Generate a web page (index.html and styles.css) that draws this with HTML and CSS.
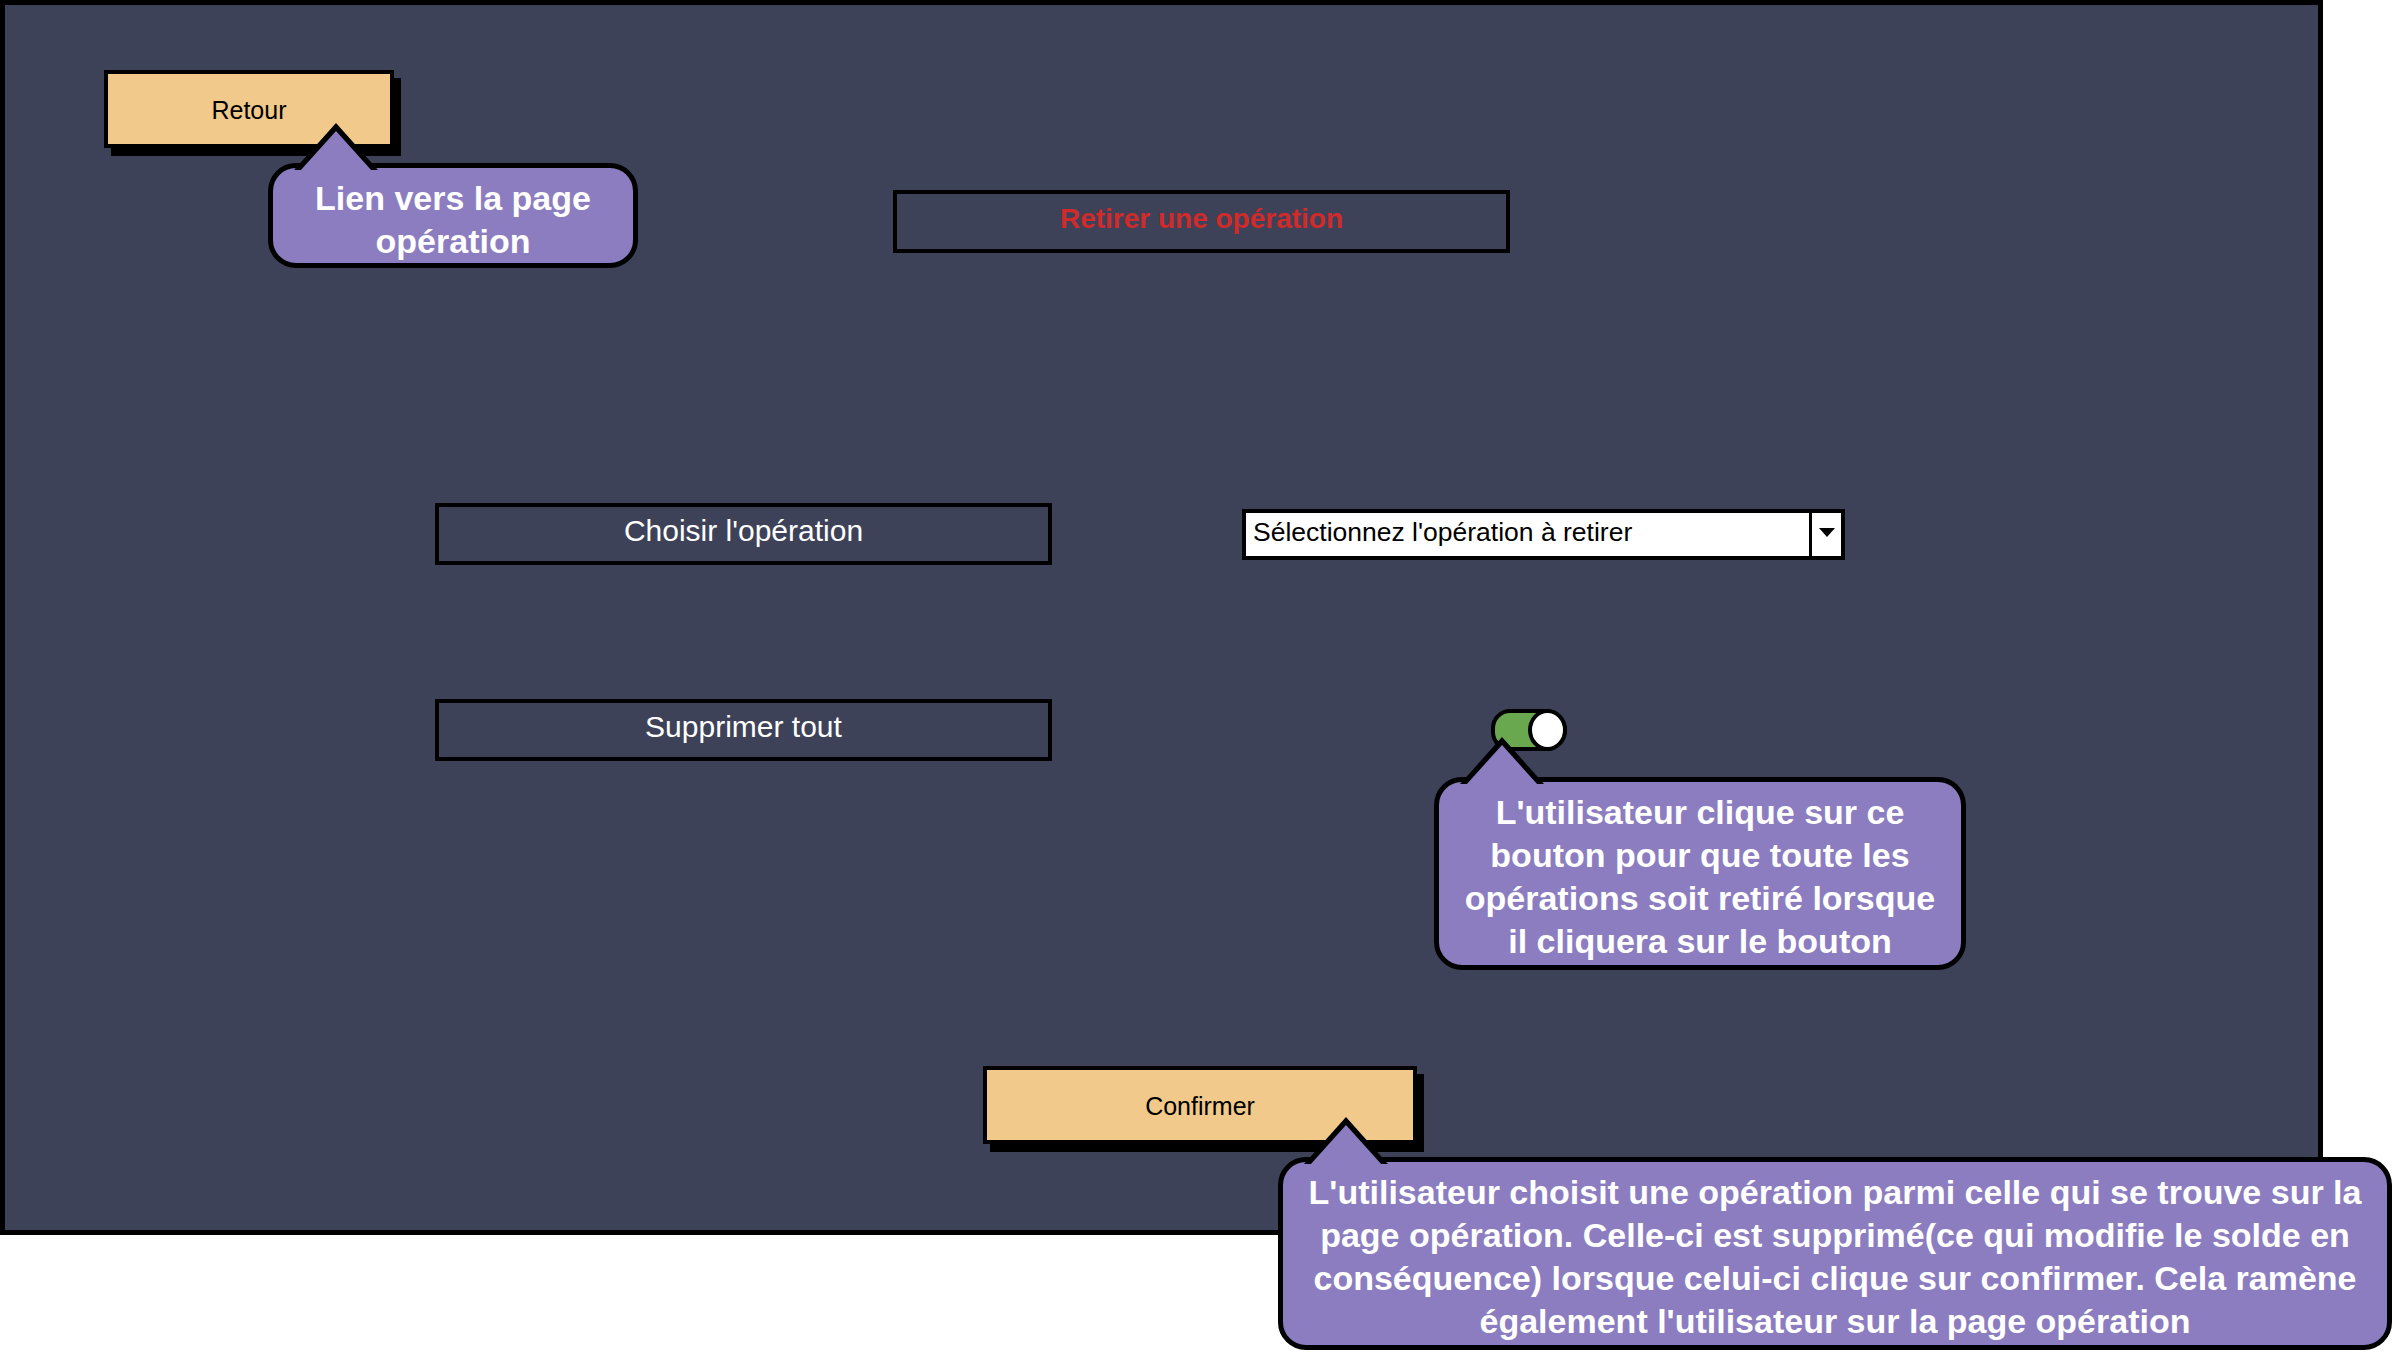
FILE: index.html
```html
<!DOCTYPE html>
<html lang="fr">
<head>
  <meta charset="UTF-8" />
  <meta name="viewport" content="width=device-width, initial-scale=1.0" />
  <title>Retirer une opération</title>
  <link rel="stylesheet" href="styles.css">
</head>
<body>
  <div class="screen">
    <div class="row row-back">
      <button class="btn-orange btn-back">Retour</button>
    </div>

    <div class="row row-title">
      <div class="title-box">Retirer une opération</div>
    </div>

    <div class="row row-choose">
      <div class="label-box">Choisir l'opération</div>
      <div class="select">
        <span class="select-text">Sélectionnez l'opération à retirer</span>
        <span class="select-arrow"></span>
      </div>
    </div>

    <div class="row row-delete">
      <div class="label-box">Supprimer tout</div>
      <div class="toggle"><span class="toggle-knob"></span></div>
    </div>

    <div class="row row-confirm">
      <button class="btn-orange btn-confirm">Confirmer</button>
    </div>
  </div>

  <div class="callout callout-back">Lien vers la page<br>opération</div>

  <div class="callout callout-toggle">L'utilisateur clique sur ce<br>bouton pour que toute les<br>opérations soit retiré lorsque<br>il cliquera sur le bouton</div>

  <div class="callout callout-confirm">L'utilisateur choisit une opération parmi celle qui se trouve sur la<br>page opération. Celle-ci est supprimé(ce qui modifie le solde en<br>conséquence) lorsque celui-ci clique sur confirmer. Cela ramène<br>également l'utilisateur sur la page opération</div>
</body>
</html>
```

FILE: styles.css
```css
* {
  box-sizing: border-box;
  margin: 0;
  padding: 0;
}
body {
  width: 2392px;
  height: 1352px;
  overflow: hidden;
  background: #ffffff;
  font-family: 'Liberation Sans', Arial, sans-serif;
  position: relative;
}
.screen {
  width: 2323px;
  height: 1235px;
  background: #3d4259;
  border: 5px solid #000;
}
.row {
  display: flex;
  align-items: center;
}
.row-back {
  margin-top: 65px;
  padding-left: 99px;
}
.row-title {
  margin-top: 42px;
  padding-left: 888px;
}
.row-choose {
  margin-top: 250px;
  padding-left: 430px;
}
.row-delete {
  margin-top: 134px;
  padding-left: 430px;
}
.row-confirm {
  margin-top: 305px;
  padding-left: 978px;
}
.btn-orange {
  background: #f0c98b;
  border: 4px solid #000;
  box-shadow: 7px 8px 0 #000;
  font-family: 'Liberation Sans', Arial, sans-serif;
  font-size: 25px;
  color: #000;
  cursor: pointer;
}
.btn-back {
  width: 290px;
  height: 78px;
  padding-top: 3px;
}
.btn-confirm {
  width: 434px;
  height: 78px;
  padding-top: 2px;
}
.title-box {
  width: 617px;
  height: 63px;
  border: 4px solid #000;
  display: flex;
  align-items: center;
  justify-content: center;
  padding-bottom: 5px;
  color: #d02a2a;
  font-size: 28px;
  font-weight: bold;
}
.label-box {
  width: 617px;
  height: 62px;
  border: 4px solid #000;
  display: flex;
  align-items: center;
  justify-content: center;
  padding-bottom: 6px;
  color: #ffffff;
  font-size: 30px;
}
.select {
  margin-left: 190px;
  width: 603px;
  height: 51px;
  background: #ffffff;
  border: 4px solid #000;
  display: flex;
  align-items: center;
}
.select-text {
  flex: 1;
  padding: 0 0 4px 7px;
  font-size: 26.5px;
  color: #000;
}
.select-arrow {
  width: 32px;
  height: 100%;
  border-left: 3px solid #000;
  position: relative;
}
.select-arrow::after {
  content: "";
  position: absolute;
  left: 7px;
  top: 15px;
  border-left: 8px solid transparent;
  border-right: 8px solid transparent;
  border-top: 9px solid #000;
}
.toggle {
  margin-left: 439px;
  width: 76px;
  height: 42px;
  background: #6aa84f;
  border: 4px solid #000;
  border-radius: 20px 22px 22px 20px;
  position: relative;
}
.toggle-knob {
  position: absolute;
  right: -4px;
  top: -4px;
  width: 39px;
  height: 42px;
  background: #ffffff;
  border: 4px solid #000;
  border-radius: 50%;
}
.callout {
  position: absolute;
  z-index: 2;
  background: #8b7dc0;
  border: 5px solid #000;
  border-radius: 28px;
  color: #ffffff;
  font-size: 34px;
  font-weight: bold;
  line-height: 43px;
  text-align: center;
  white-space: nowrap;
}
.callout::before,
.callout::after {
  content: "";
  position: absolute;
  clip-path: polygon(50% 0, 100% 100%, 0 100%);
}
.callout::before {
  left: 21px;
  top: -45px;
  width: 84px;
  height: 47px;
  background: #000;
}
.callout::after {
  left: 27px;
  top: -37px;
  width: 72px;
  height: 40px;
  background: #8b7dc0;
}
.callout-back {
  left: 268px;
  top: 163px;
  width: 370px;
  height: 105px;
  padding-top: 9px;
}
.callout-toggle {
  left: 1434px;
  top: 777px;
  width: 532px;
  height: 193px;
  padding-top: 9px;
}
.callout-confirm {
  left: 1278px;
  top: 1157px;
  width: 1114px;
  height: 193px;
  padding-top: 9px;
}
```
